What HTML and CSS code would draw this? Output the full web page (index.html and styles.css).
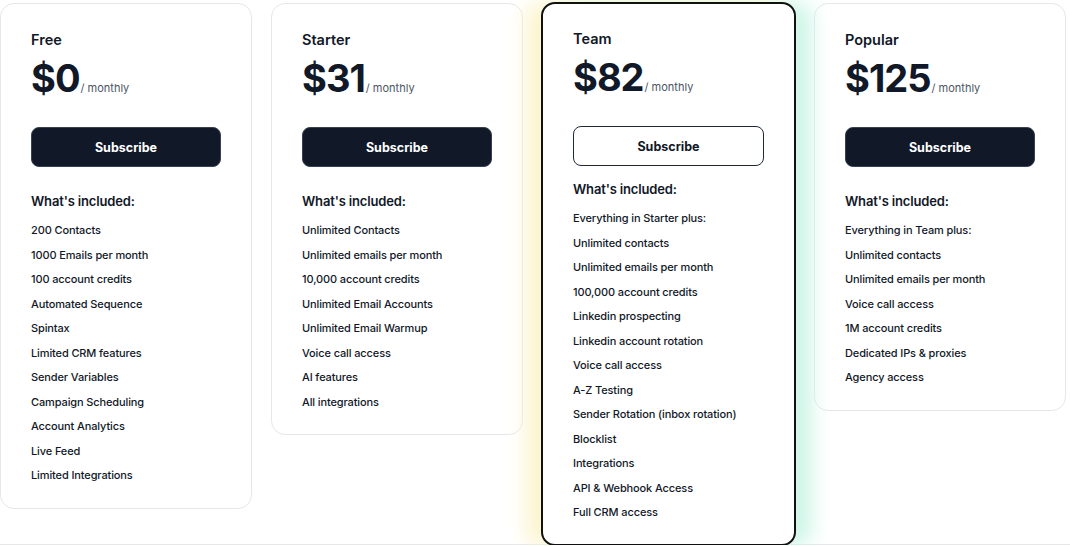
FILE: index.html
```html
<!DOCTYPE html>
<html lang="en">
<head>
<meta charset="utf-8">
<title>Pricing</title>
<link rel="stylesheet" href="styles.css">
</head>
<body>
<section class="pricing">
  <div class="card">
    <div class="plan-name">Free</div>
    <div class="price"><span class="amount">$0</span><span class="period">/ monthly</span></div>
    <button class="btn">Subscribe</button>
    <div class="included">What's included:</div>
    <ul class="features">
      <li>200 Contacts</li>
      <li>1000 Emails per month</li>
      <li>100 account credits</li>
      <li>Automated Sequence</li>
      <li>Spintax</li>
      <li>Limited CRM features</li>
      <li>Sender Variables</li>
      <li>Campaign Scheduling</li>
      <li>Account Analytics</li>
      <li>Live Feed</li>
      <li>Limited Integrations</li>
    </ul>
  </div>
  <div class="card">
    <div class="plan-name">Starter</div>
    <div class="price"><span class="amount">$31</span><span class="period">/ monthly</span></div>
    <button class="btn">Subscribe</button>
    <div class="included">What's included:</div>
    <ul class="features">
      <li>Unlimited Contacts</li>
      <li>Unlimited emails per month</li>
      <li>10,000 account credits</li>
      <li>Unlimited Email Accounts</li>
      <li>Unlimited Email Warmup</li>
      <li>Voice call access</li>
      <li>AI features</li>
      <li>All integrations</li>
    </ul>
  </div>
  <div class="card card-featured">
    <div class="plan-name">Team</div>
    <div class="price"><span class="amount">$82</span><span class="period">/ monthly</span></div>
    <button class="btn btn-outline">Subscribe</button>
    <div class="included included-tight">What's included:</div>
    <ul class="features">
      <li>Everything in Starter plus:</li>
      <li>Unlimited contacts</li>
      <li>Unlimited emails per month</li>
      <li>100,000 account credits</li>
      <li>Linkedin prospecting</li>
      <li>Linkedin account rotation</li>
      <li>Voice call access</li>
      <li>A-Z Testing</li>
      <li>Sender Rotation (inbox rotation)</li>
      <li>Blocklist</li>
      <li>Integrations</li>
      <li>API &amp; Webhook Access</li>
      <li>Full CRM access</li>
    </ul>
  </div>
  <div class="card">
    <div class="plan-name">Popular</div>
    <div class="price"><span class="amount">$125</span><span class="period">/ monthly</span></div>
    <button class="btn">Subscribe</button>
    <div class="included">What's included:</div>
    <ul class="features">
      <li>Everything in Team plus:</li>
      <li>Unlimited contacts</li>
      <li>Unlimited emails per month</li>
      <li>Voice call access</li>
      <li>1M account credits</li>
      <li>Dedicated IPs &amp; proxies</li>
      <li>Agency access</li>
    </ul>
  </div>
</section>
</body>
</html>
```

FILE: styles.css
```css
* { box-sizing: border-box; }

html, body {
  margin: 0;
  padding: 0;
  background: #ffffff;
  overflow: hidden;
}

body {
  font-family: Inter, "Liberation Sans", sans-serif;
  color: #111827;
}

.pricing {
  display: flex;
  align-items: flex-start;
  gap: 18px;
  height: 545px;
  padding-top: 3px;
  border-bottom: 1px solid #e5e7eb;
}

.card {
  width: 252px;
  flex: none;
  background: #ffffff;
  border: 1px solid #e5e7eb;
  border-radius: 14px;
  padding: 26px 30px 20px;
}

.card:nth-child(2) { margin-left: 1px; }

.card-featured {
  position: relative;
  z-index: 1;
  width: 255px;
  margin-top: -1px;
  margin-bottom: -2px;
  border: 2px solid #111111;
  padding: 25px 30px 19px;
  box-shadow: -16px 0 20px 0 #fcf5d0, 16px 0 20px 0 #cef6e7;
}

.plan-name {
  font-size: 14.5px;
  line-height: 20px;
  font-weight: 600;
  color: #111827;
}

.price {
  margin-top: 4px;
  display: flex;
  align-items: baseline;
  height: 48px;
}

.amount {
  font-size: 38px;
  line-height: 48px;
  font-weight: 700;
  letter-spacing: -1px;
  color: #111827;
}

.period {
  font-size: 11px;
  color: #4b5563;
  margin-left: 1px;
}

.btn {
  display: block;
  width: 100%;
  height: 40px;
  margin-top: 25px;
  border-radius: 8px;
  border: 1px solid #374151;
  background: #111827;
  color: #ffffff;
  font-family: inherit;
  font-size: 12.5px;
  font-weight: 700;
  cursor: pointer;
}

.btn-outline {
  background: #ffffff;
  color: #111827;
  border: 1.5px solid #1f2937;
}

.included {
  margin-top: 24px;
  font-size: 13px;
  line-height: 20px;
  font-weight: 600;
  letter-spacing: -0.15px;
  color: #111827;
}

.included-tight { margin-top: 13px; }

.features {
  list-style: none;
  margin: 7px 0 0;
  padding: 0;
}

.features li {
  font-size: 11px;
  line-height: 24.5px;
  font-weight: 500;
  letter-spacing: -0.12px;
  color: #111827;
  white-space: nowrap;
}
```
